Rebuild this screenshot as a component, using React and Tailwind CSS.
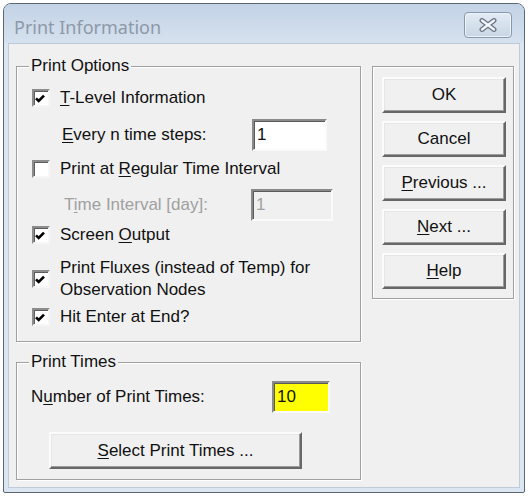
import React from "react";

const CheckMark = () => (
  <svg width="10" height="9" viewBox="0 0 10 9" className="ml-[1px]">
    <path d="M1 4.3 L3.7 7 L9 1.6" fill="none" stroke="#000" strokeWidth="2.6" />
  </svg>
);

function CheckBox({ checked }) {
  return (
    <span className="flex h-[18px] w-[18px] shrink-0 items-center justify-start border-2 border-t-[#8c8c8c] border-l-[#8c8c8c] border-b-[#f6f6f6] border-r-[#f6f6f6] bg-white shadow-[inset_1px_1px_0_#5e5e5e]">
      {checked && <CheckMark />}
    </span>
  );
}

function CheckRow({ checked, children, className }) {
  return (
    <div className={"flex items-center gap-[10px] pl-[15px] " + (className || "")}>
      <CheckBox checked={checked} />
      <span className="leading-[22px]">{children}</span>
    </div>
  );
}

function DlgButton({ children, className }) {
  return (
    <button
      className={
        "flex items-center justify-center border-2 border-t-[#fbfbfb] border-l-[#fbfbfb] border-b-[#676767] border-r-[#676767] bg-[#f0f0f0] text-[17px] text-[#111] shadow-[inset_-1px_-1px_0_#9c9c9c,inset_1px_1px_0_#e6e6e6] " +
        (className || "")
      }
    >
      {children}
    </button>
  );
}

const editCls =
  "flex items-center border-2 border-t-[#8a8a8a] border-l-[#8a8a8a] border-b-[#fafafa] border-r-[#fafafa] pl-[3px] shadow-[inset_1px_1px_0_#5a5a5a]";

const groupCls =
  "border border-[#a0a0a0] shadow-[inset_1px_1px_0_#fff,1px_1px_0_#fff]";

export default function App() {
  return (
    <div className="h-[496px] w-[528px] bg-white pl-[3px] pt-[3px] font-['Liberation_Sans',Arial,sans-serif] text-[17px] text-[#111]">
      <div className="flex h-[490px] w-[522px] flex-col rounded-t-[8px] rounded-b-[2px] border border-[#5d6774] bg-[#dbe6f2]">
        {/* title bar */}
        <div className="flex h-[39px] shrink-0 items-start justify-between rounded-t-[7px] bg-gradient-to-b from-[#c3d3e6] to-[#d5e1ee] pl-[10px] pr-[12px]">
          <span className="mt-[11px] font-['Noto_Sans',sans-serif] text-[18px] leading-[24px] text-[#8d99a7]">
            Print Information
          </span>
          <div className="mt-[8px] flex h-[26px] w-[48px] items-center justify-center rounded-[4px] border border-[#8799ae] bg-gradient-to-b from-[#e3ebf4] to-[#c9d6e4] shadow-[inset_0_0_0_1px_#eef3f8]">
            <svg width="20" height="14" viewBox="0 0 20 14">
              <path d="M4 2.5 L16 11.5 M16 2.5 L4 11.5" stroke="#6c7888" strokeWidth="5" strokeLinecap="round" />
              <path d="M4 2.5 L16 11.5 M16 2.5 L4 11.5" stroke="#f4f6f9" strokeWidth="2.2" strokeLinecap="round" />
            </svg>
          </div>
        </div>

        {/* client area */}
        <div className="mx-[4px] flex h-[445px] border border-[#bfcbd9] bg-[#f0f0f0] pl-[7px] pt-[13px]">
          <div className="flex w-[345px] flex-col">
            <fieldset className={groupCls + " h-[285px] w-[345px]"}>
              <legend className="ml-[12px] bg-[#f0f0f0] px-[2px] leading-[18px]">Print Options</legend>
              <CheckRow checked className="mt-[12px] h-[22px]">
                <u className="underline-offset-2">T</u>-Level Information
              </CheckRow>
              <div className="mt-[10px] flex h-[32px] items-center pl-[45px]">
                <span className="w-[190px]">
                  <u className="underline-offset-2">E</u>very n time steps:
                </span>
                <div className={editCls + " h-[32px] w-[75px] bg-white"}>1</div>
              </div>
              <CheckRow className="mt-[7px] h-[22px]">
                Print at <u className="underline-offset-2">R</u>egular Time Interval
              </CheckRow>
              <div className="mt-[9px] flex h-[32px] items-center pl-[47px] text-[#a0a0a0]">
                <span className="w-[187px]">
                  T<u className="underline-offset-2">i</u>me Interval [day]:
                </span>
                <div className={editCls + " h-[32px] w-[82px] bg-[#f0f0f0]"}>1</div>
              </div>
              <CheckRow checked className="mt-[3px] h-[22px]">
                Screen <u className="underline-offset-2">O</u>utput
              </CheckRow>
              <CheckRow checked className="mt-[11px] h-[44px]">
                Print Fluxes (instead of Temp) for
                <br />
                Observation Nodes
              </CheckRow>
              <CheckRow checked className="mt-[5px] h-[22px]">
                Hit Enter at End?
              </CheckRow>
            </fieldset>

            <fieldset className={groupCls + " mt-[11px] h-[127px] w-[345px]"}>
              <legend className="ml-[12px] bg-[#f0f0f0] px-[2px] leading-[18px]">Print Times</legend>
              <div className="mt-[10px] flex h-[32px] items-center pl-[14px]">
                <span className="w-[241px]">
                  N<u className="underline-offset-2">u</u>mber of Print Times:
                </span>
                <div className={editCls + " h-[32px] w-[58px] bg-[#ffff00]"}>10</div>
              </div>
              <div className="mt-[19px] pl-[32px]">
                <DlgButton className="h-[37px] w-[253px]">
                  <span>
                    <u className="underline-offset-2">S</u>elect Print Times ...
                  </span>
                </DlgButton>
              </div>
            </fieldset>
          </div>

          <fieldset className={groupCls + " ml-[11px] mt-[9px] flex h-[233px] w-[142px] flex-col gap-[8px] pl-[9px] pt-[10px]"}>
            <DlgButton className="h-[36px] w-[124px]">OK</DlgButton>
            <DlgButton className="h-[36px] w-[124px]">Cancel</DlgButton>
            <DlgButton className="h-[36px] w-[124px]">
              <span>
                <u className="underline-offset-2">P</u>revious ...
              </span>
            </DlgButton>
            <DlgButton className="h-[36px] w-[124px]">
              <span>
                <u className="underline-offset-2">N</u>ext ...
              </span>
            </DlgButton>
            <DlgButton className="h-[36px] w-[124px]">
              <span>
                <u className="underline-offset-2">H</u>elp
              </span>
            </DlgButton>
          </fieldset>
        </div>
      </div>
    </div>
  );
}
